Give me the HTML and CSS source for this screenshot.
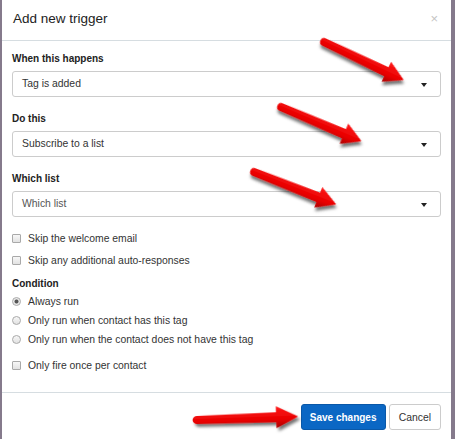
FILE: index.html
```html
<!DOCTYPE html>
<html lang="en">
<head>
  <meta charset="UTF-8">
  <title>Add new trigger</title>
  <link rel="stylesheet" href="styles.css">
</head>
<body>

  <div class="modal">
    <div class="modal-header">
      <h2>Add new trigger</h2>
      <span class="close">&times;</span>
    </div>

    <div class="modal-body">
      <div class="form-row">
        <label class="field-label">When this happens</label>
        <div class="select">Tag is added<span class="caret"></span></div>
      </div>

      <div class="form-row">
        <label class="field-label">Do this</label>
        <div class="select">Subscribe to a list<span class="caret"></span></div>
      </div>

      <div class="form-row">
        <label class="field-label">Which list</label>
        <div class="select placeholder">Which list<span class="caret"></span></div>
      </div>

      <div class="checks">
        <label class="option"><input type="checkbox"> Skip the welcome email</label>
        <label class="option"><input type="checkbox"> Skip any additional auto-responses</label>
      </div>

      <label class="field-label condition">Condition</label>
      <div class="radios">
        <label class="option"><input type="radio" name="cond" checked> Always run</label>
        <label class="option"><input type="radio" name="cond"> Only run when contact has this tag</label>
        <label class="option"><input type="radio" name="cond"> Only run when the contact does not have this tag</label>
      </div>

      <label class="option once"><input type="checkbox"> Only fire once per contact</label>
    </div>

    <div class="modal-footer">
      <button class="btn btn-primary">Save changes</button>
      <button class="btn">Cancel</button>
    </div>
  </div>

  <!-- red pointer arrows drawn over the dialog -->
  <svg class="arrows" width="455" height="439" viewBox="0 0 455 439">
    <defs>
      <linearGradient id="redFill" x1="0" y1="0" x2="0" y2="1">
        <stop offset="0" stop-color="#ff1a1a"/>
        <stop offset="0.6" stop-color="#e80000"/>
        <stop offset="1" stop-color="#a80000"/>
      </linearGradient>
      <filter id="shadow" x="-20%" y="-50%" width="140%" height="200%">
        <feDropShadow dx="2" dy="3" stdDeviation="1.6" flood-color="#000" flood-opacity="0.55"/>
      </filter>
      <path id="arrow" d="M0 -4 L72 -5 L72 -11 L92 0 L72 11 L72 5 L0 4 A4 4 0 0 1 0 -4 Z"/>
    </defs>
    <use href="#arrow" fill="url(#redFill)" filter="url(#shadow)" transform="translate(324 42) rotate(25.5) scale(0.96 1)"/>
    <use href="#arrow" fill="url(#redFill)" filter="url(#shadow)" transform="translate(281 107) rotate(23) scale(0.95 1)"/>
    <use href="#arrow" fill="url(#redFill)" filter="url(#shadow)" transform="translate(254 172) rotate(21.5) scale(0.96 1)"/>
    <use href="#arrow" fill="url(#redFill)" filter="url(#shadow)" transform="translate(197 420) rotate(-2) scale(1.1 1)"/>
  </svg>

</body>
</html>
```

FILE: styles.css
```css
* {
  box-sizing: border-box;
}

body {
  margin: 0;
  background: #857a8c;
  font-family: 'Liberation Sans', Arial, sans-serif;
  color: #333;
  position: relative;
  height: 439px;
  overflow: hidden;
}

.modal {
  margin-left: 2px;
  width: 449px;
  height: 439px;
  background: #fff;
}

.modal-header {
  height: 41px;
  padding: 0 11px 4px;
  border-bottom: 1px solid #d6dde1;
  display: flex;
  align-items: center;
  justify-content: space-between;
}

.modal-header h2 {
  margin: 0;
  font-size: 13.5px;
  font-weight: normal;
  color: #222;
}

.close {
  color: #c4c4c4;
  font-size: 13px;
  margin-right: 2px;
}

.modal-body {
  padding: 12px 10px 20px;
}

.form-row {
  margin-bottom: 16px;
}

.field-label {
  display: block;
  font-size: 10px;
  line-height: 12px;
  font-weight: bold;
  color: #222;
  margin-bottom: 6px;
}

.select {
  position: relative;
  height: 26px;
  border: 1px solid #ccc;
  border-radius: 3px;
  padding: 0 9px;
  font-size: 10.4px;
  line-height: 24px;
  color: #333;
}

.select.placeholder {
  color: #555;
}

.caret {
  position: absolute;
  right: 13px;
  top: 11px;
  width: 0;
  height: 0;
  border-left: 3.5px solid transparent;
  border-right: 3.5px solid transparent;
  border-top: 4px solid #222;
}

.option {
  display: flex;
  align-items: center;
  height: 14px;
  font-size: 10.4px;
  color: #333;
}

.checks {
  margin-top: -2px;
}

.checks .option + .option {
  margin-top: 8px;
}

.condition {
  margin-top: 11px;
  margin-bottom: 4px;
}

.radios .option + .option {
  margin-top: 5px;
}

.once {
  margin-top: 12px;
}

input[type="checkbox"],
input[type="radio"] {
  appearance: none;
  -webkit-appearance: none;
  width: 9px;
  height: 9px;
  margin: 0 7px 0 0;
  border: 1px solid #a9a9a9;
  background: linear-gradient(#f7f7f7, #e2e2e2);
  border-radius: 1px;
}

input[type="radio"] {
  border-radius: 50%;
}

input[type="radio"]:checked {
  background: radial-gradient(circle, #555 0, #555 1.6px, #e6e6e6 2.4px, #f4f4f4 100%);
}

.modal-footer {
  border-top: 1px solid #d6dde1;
  padding: 11px 10px 0;
  display: flex;
  justify-content: flex-end;
  gap: 3px;
}

.btn {
  height: 26px;
  padding: 0 9px;
  font-family: inherit;
  font-size: 10.4px;
  color: #333;
  background: #fff;
  border: 1px solid #ccc;
  border-radius: 3px;
  white-space: nowrap;
}

.btn-primary {
  width: 85px;
  padding: 0;
  font-size: 10px;
  color: #fff;
  font-weight: bold;
  background: #0b67c4;
  border-color: #0a58a8;
}

.arrows {
  position: absolute;
  left: 0;
  top: 0;
  pointer-events: none;
}
```
